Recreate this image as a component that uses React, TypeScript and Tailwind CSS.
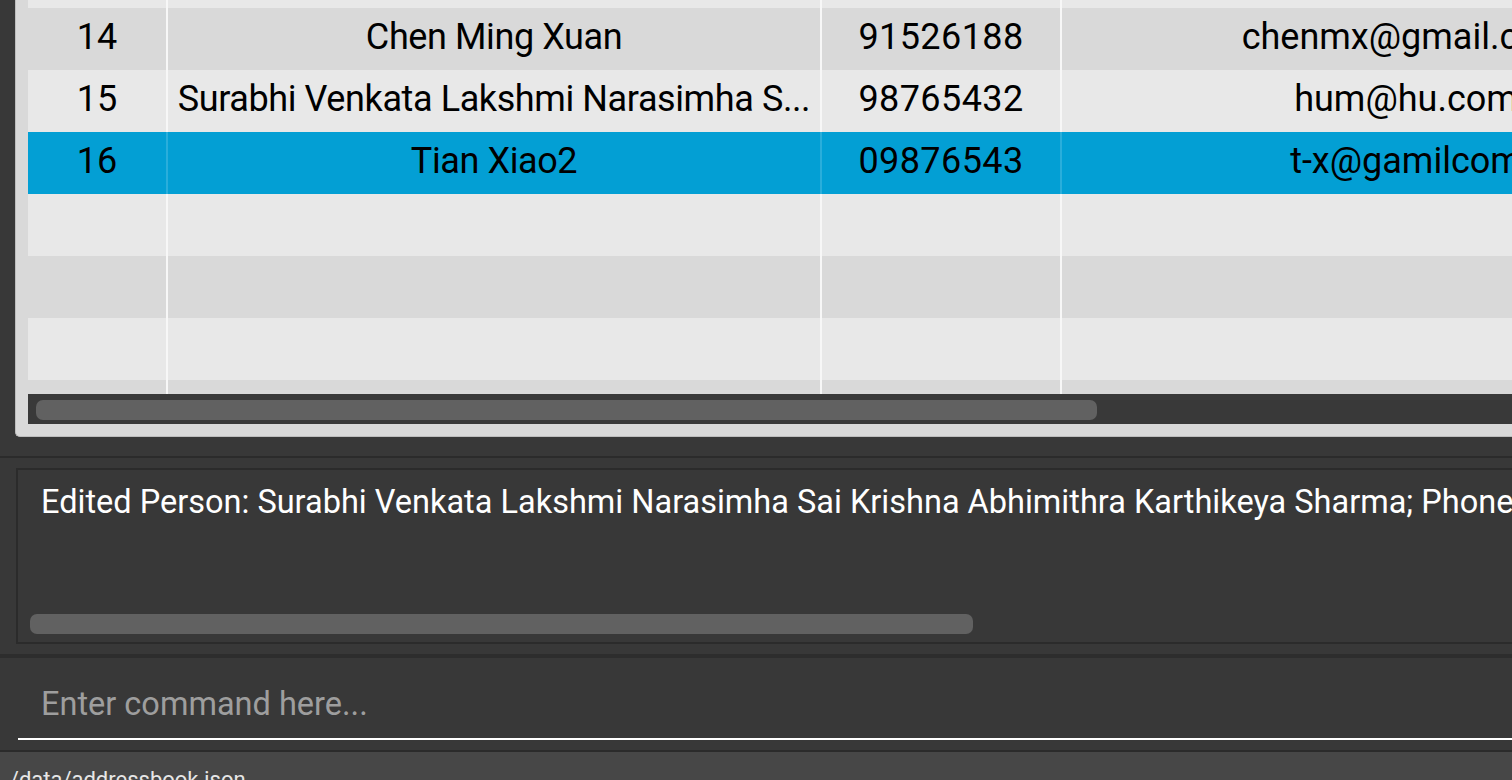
import React from "react";

type Row = {
  idx: string;
  name: string;
  phone: string;
  email: string;
  tone: "light" | "dark" | "sel";
};

const rows: Row[] = [
  { idx: "", name: "", phone: "", email: "", tone: "light" },
  { idx: "14", name: "Chen Ming Xuan", phone: "91526188", email: "chenmx@gmail.com", tone: "dark" },
  {
    idx: "15",
    name: "Surabhi Venkata Lakshmi Narasimha S...",
    phone: "98765432",
    email: "hum@hu.com",
    tone: "light",
  },
  { idx: "16", name: "Tian Xiao2", phone: "09876543", email: "t-x@gamilcom", tone: "sel" },
  { idx: "", name: "", phone: "", email: "", tone: "light" },
  { idx: "", name: "", phone: "", email: "", tone: "dark" },
  { idx: "", name: "", phone: "", email: "", tone: "light" },
  { idx: "", name: "", phone: "", email: "", tone: "dark" },
];

function TableRow({ r }: { r: Row }) {
  const bg =
    r.tone === "sel" ? "bg-[#039fd4]" : r.tone === "dark" ? "bg-[#d9d9d9]" : "bg-[#e8e8e8]";
  const sep = r.tone === "sel" ? "border-[#2aaedb]" : "border-[#f7f7f7]";
  return (
    <div className={`flex h-[62px] shrink-0 ${bg} text-[36px] leading-[58px] text-black`}>
      <div className={`h-full w-[140px] shrink-0 border-r-2 ${sep} text-center`}>{r.idx}</div>
      <div
        className={`h-full w-[654px] shrink-0 overflow-hidden whitespace-nowrap border-r-2 ${sep} text-center tracking-[-0.4px]`}
      >
        {r.name}
      </div>
      <div className={`h-full w-[240px] shrink-0 border-r-2 ${sep} text-center tracking-[0.4px]`}>{r.phone}</div>
      <div className="h-full w-[688px] shrink-0 overflow-hidden whitespace-nowrap text-center">{r.email}</div>
    </div>
  );
}

export default function App() {
  return (
    <div
      className="flex h-[780px] w-[1512px] flex-col overflow-hidden bg-[#383838]"
      style={{ fontFamily: "Roboto, 'Noto Sans', sans-serif" }}
    >
      {/* Table panel */}
      <div className="flex h-[437px] shrink-0 pl-[15px]">
        <div className="flex w-[1600px] shrink-0 flex-col rounded-bl-[5px] border-b border-l border-[#bdbdbd] bg-[#d9d9d9] pb-[12px] pl-[12px]">
          <div className="flex-1 overflow-hidden">
            <div className="-mt-[54px] flex flex-col">
              {rows.map((r, i) => (
                <TableRow key={i} r={r} />
              ))}
            </div>
          </div>
          <div className="h-[30px] shrink-0 bg-[#393939] pl-[8px] pt-[6px]">
            <div className="h-[20px] w-[1061px] rounded-[7px] bg-[#616161]" />
          </div>
        </div>
      </div>

      {/* gap + separator */}
      <div className="h-[19px] shrink-0" />
      <div className="h-[2px] shrink-0 bg-[#2b2b2b]" />
      <div className="h-[10px] shrink-0" />

      {/* Result display */}
      <div className="flex h-[176px] shrink-0 pl-[16px]">
        <div className="flex w-[1600px] shrink-0 flex-col border-2 border-[#2b2b2b] pb-[8px] pl-[12px]">
          <div className="flex-1 overflow-hidden whitespace-nowrap pl-[11px] pt-[12px] text-[32.5px] leading-[40px] text-white">
            Edited Person: Surabhi Venkata Lakshmi Narasimha Sai Krishna Abhimithra Karthikeya Sharma; Phone: 98765432; Email: hum@hu.com; Address: Hu Street
          </div>
          <div className="h-[20px] w-[943px] shrink-0 rounded-[7px] bg-[#616161]" />
        </div>
      </div>

      <div className="h-[10px] shrink-0" />
      <div className="h-[4px] shrink-0 bg-[#2d2d2d]" />

      {/* Command box */}
      <div className="flex h-[92px] shrink-0 flex-col pl-[18px]">
        <div className="flex-1 overflow-hidden whitespace-nowrap pl-[23px] pt-[26px] text-[32.5px] leading-[40px] text-[#9e9e9e]">
          Enter command here...
        </div>
        <div className="h-[2px] shrink-0 bg-white" />
        <div className="h-[10px] shrink-0" />
      </div>
      <div className="h-[2px] shrink-0 bg-[#2b2b2b]" />

      {/* Status bar */}
      <div className="flex-1 overflow-hidden whitespace-nowrap bg-[#474747] pl-[4px] pt-[14px] text-[22px] leading-[28px] text-[#e6e6e6]">
        ./data/addressbook.json
      </div>
    </div>
  );
}
